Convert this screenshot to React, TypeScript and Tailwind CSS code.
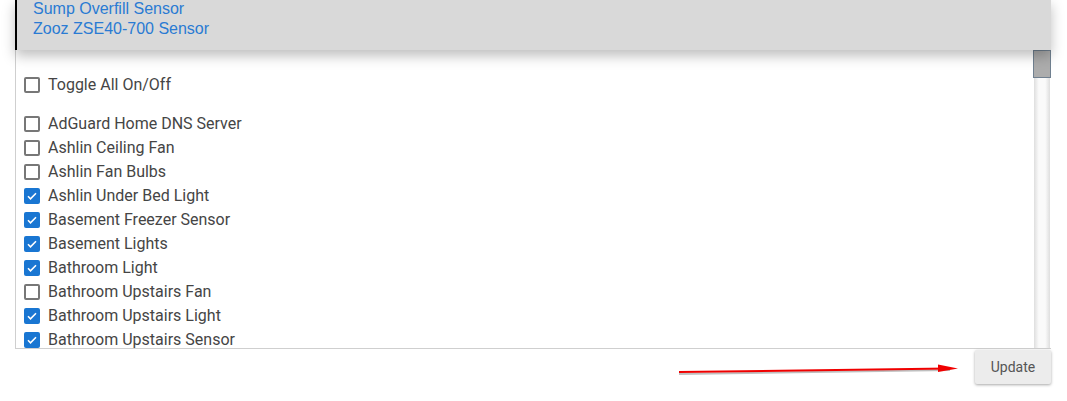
import React from 'react';

const devices = [
  { name: 'AdGuard Home DNS Server', on: false },
  { name: 'Ashlin Ceiling Fan', on: false },
  { name: 'Ashlin Fan Bulbs', on: false },
  { name: 'Ashlin Under Bed Light', on: true },
  { name: 'Basement Freezer Sensor', on: true },
  { name: 'Basement Lights', on: true },
  { name: 'Bathroom Light', on: true },
  { name: 'Bathroom Upstairs Fan', on: false },
  { name: 'Bathroom Upstairs Light', on: true },
  { name: 'Bathroom Upstairs Sensor', on: true },
];

function Box({ on }: { on: boolean }) {
  if (on) {
    return (
      <span className="w-4 h-4 rounded-[2px] bg-[#1976d2] flex items-center justify-center shrink-0">
        <svg width="12" height="12" viewBox="0 0 24 24">
          <path d="M4 12.5l5 5L20 6.5" fill="none" stroke="white" strokeWidth="3.2" />
        </svg>
      </span>
    );
  }
  return <span className="w-4 h-4 rounded-[2px] border-2 border-[#777] bg-white shrink-0" />;
}

function Row({ name, on }: { name: string; on: boolean }) {
  return (
    <div className="h-6 flex items-center gap-2 pl-2">
      <Box on={on} />
      <span className="text-[16px] text-[#454545]">{name}</span>
    </div>
  );
}

export default function App() {
  return (
    <div className="w-[1067px] h-[401px] bg-white overflow-hidden" style={{ fontFamily: 'Roboto, sans-serif' }}>
      <div className="ml-[15px] mr-[16px]">
        <div className="relative z-10 h-[51px] bg-[#d9d9d9] border-l-2 border-black shadow-[0_6px_12px_rgba(0,0,0,0.25)] pl-4">
          <div className="text-[16px] leading-5 text-[#2a7bd3] -mt-[1px]" style={{ fontFamily: '"Liberation Sans", Arial, sans-serif' }}>
            <div>Sump Overfill Sensor</div>
            <div>Zooz ZSE40-700 Sensor</div>
          </div>
        </div>
        <div className="h-[299px] flex border-l border-b border-[#cfcfcf] overflow-hidden">
          <div className="flex-1 pt-[23px]">
            <Row name="Toggle All On/Off" on={false} />
            <div className="h-[15px]" />
            {devices.map((d) => (
              <Row key={d.name} name={d.name} on={d.on} />
            ))}
          </div>
          <div className="w-[18px] flex flex-col">
            <div className="h-[28px] bg-[#acacac] border border-[#708090]" />
            <div className="flex-1 mx-[1px] bg-[linear-gradient(to_right,#dedede,#fafafa_30%,#fafafa_70%,#dedede)]" />
          </div>
        </div>
        <div className="flex justify-end items-start">
          <svg width="290" height="40" className="mr-[15px]">
            <line x1="9" y1="25" x2="280" y2="21" stroke="rgba(0,0,0,0.25)" strokeWidth="2" />
            <line x1="9" y1="23" x2="278" y2="19.5" stroke="#f00000" strokeWidth="2" />
            <polygon points="268,15.5 288,19.5 268,23" fill="#f00000" />
          </svg>
          <button className="mt-[1px] w-[76px] h-[34px] bg-[#ececec] rounded-[2px] shadow-[0_1px_3px_rgba(0,0,0,0.35)] text-[14px] text-[#555]">
            Update
          </button>
        </div>
      </div>
    </div>
  );
}
